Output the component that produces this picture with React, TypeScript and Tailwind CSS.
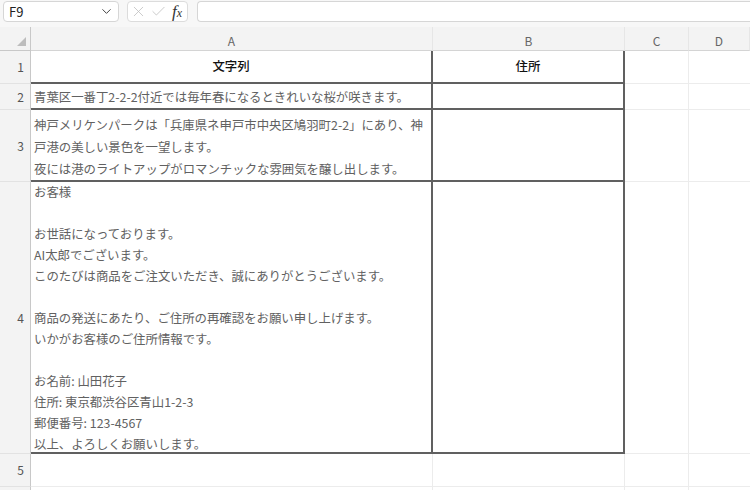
import { ChevronDown, X, Check } from "lucide-react";

const cols = ["A", "B", "C", "D"];

const row3 = [
  "神戸メリケンパークは「兵庫県ネ申戸市中央区鳩羽町2-2」にあり、神",
  "戸港の美しい景色を一望します。",
  "夜には港のライトアップがロマンチックな雰囲気を醸し出します。",
];

const row4 = [
  "お客様",
  "",
  "お世話になっております。",
  "AI太郎でございます。",
  "このたびは商品をご注文いただき、誠にありがとうございます。",
  "",
  "商品の発送にあたり、ご住所の再確認をお願い申し上げます。",
  "いかがお客様のご住所情報です。",
  "",
  "お名前: 山田花子",
  "住所: 東京都渋谷区青山1-2-3",
  "郵便番号: 123-4567",
  "以上、よろしくお願いします。",
];

const rows = [
  { n: "1", h: "h-[33px]" },
  { n: "2", h: "h-[26px]" },
  { n: "3", h: "h-[72px]" },
  { n: "4", h: "h-[272px]" },
  { n: "5", h: "h-[33px]" },
  { n: "", h: "h-[20px]" },
];

function Lines({ lines, top }: { lines: string[]; top?: boolean }) {
  return (
    <div
      className={`flex h-full flex-col overflow-hidden pl-[3px] text-[12.4px] text-[#616161] whitespace-nowrap ${
        top ? "justify-start leading-[21px]" : "justify-end leading-[22px]"
      }`}
    >
      {lines.map((l, i) => (
        <div key={i} className={`shrink-0 ${top ? "h-[21px]" : "h-[22px]"}`}>{l}</div>
      ))}
    </div>
  );
}

function CellA({ i }: { i: number }) {
  if (i === 0)
    return <div className="flex h-full items-center justify-center text-[12.4px] font-medium text-[#111]">文字列</div>;
  if (i === 1) return <Lines lines={["青葉区一番丁2-2-2付近では毎年春になるときれいな桜が咲きます。"]} />;
  if (i === 2) return <Lines lines={row3} />;
  if (i === 3) return <Lines lines={row4} top />;
  return null;
}

export default function App() {
  return (
    <div className="h-[490px] w-[750px] overflow-hidden bg-white font-['Noto_Sans_CJK_JP',sans-serif]">
      {/* formula bar */}
      <div className="flex h-[27px] items-start gap-[8px] bg-[#f7f7f7] pl-[3px] pt-[1px]">
        <div className="flex h-[21px] w-[116px] items-center justify-between rounded-[4px] border border-[#d6d6d6] bg-white pl-[5px] pr-[4px] text-[13px] text-[#222]">
          <span>F9</span>
          <ChevronDown className="h-[15px] w-[15px] text-[#444]" strokeWidth={1.6} />
        </div>
        <div className="flex h-[21px] w-[61px] items-center gap-[3px] rounded-[4px] border border-[#dcdcdc] bg-white pl-[2px]">
          <X className="h-[17px] w-[17px] text-[#bdbdbd]" strokeWidth={1.1} />
          <Check className="h-[17px] w-[17px] text-[#bdbdbd]" strokeWidth={1.1} />
          <span className="ml-[2px] font-['Liberation_Serif',serif] text-[17px] italic leading-none text-[#333]">
            f<span className="text-[12px]">x</span>
          </span>
        </div>
        <div className="ml-[1px] h-[21px] flex-1 rounded-l-[4px] border border-r-0 border-[#d6d6d6] bg-white" />
      </div>

      {/* grid */}
      <div className="grid grid-cols-[31px_402px_192px_64px_1fr]">
        {/* header row */}
        <div className="relative h-[24px] border-b border-r border-[#c8c8c8] bg-[#f3f3f3]">
          <div className="absolute bottom-[4px] right-[4px] h-0 w-0 border-b-[9px] border-l-[9px] border-b-[#bdbdbd] border-l-transparent" />
        </div>
        {cols.map((c) => (
          <div
            key={c}
            className="flex h-[24px] items-end justify-center border-b border-r border-b-[#d4d4d4] border-r-[#e6e6e6] bg-[#f3f3f3] pb-[3px] text-[12px] leading-[12px] text-[#666]"
          >
            {c}
          </div>
        ))}

        {rows.map((r, i) => {
          const boxed = i < 4;
          return [
            <div
              key={`h${i}`}
              className={`flex ${r.h} items-center justify-end border-b border-r border-b-[#e2e2e2] border-r-[#c8c8c8] bg-[#f3f3f3] pr-[6px] text-[12px] text-[#555]`}
            >
              {r.n}
            </div>,
            <div
              key={`a${i}`}
              className={`${r.h} overflow-hidden ${boxed ? "border-b-2 border-r-2 border-[#606060]" : "border-b border-r border-[#ececec]"}`}
            >
              <CellA i={i} />
            </div>,
            <div
              key={`b${i}`}
              className={`${r.h} ${boxed ? "border-b-2 border-r-2 border-[#606060]" : "border-b border-r border-[#ececec]"}`}
            >
              {i === 0 && (
                <div className="flex h-full items-center justify-center text-[12.4px] font-medium text-[#111]">住所</div>
              )}
            </div>,
            <div key={`c${i}`} className={`${r.h} border-b border-r border-[#ececec]`} />,
            <div key={`d${i}`} className={`${r.h} border-b border-[#ececec]`} />,
          ];
        })}
      </div>
    </div>
  );
}
